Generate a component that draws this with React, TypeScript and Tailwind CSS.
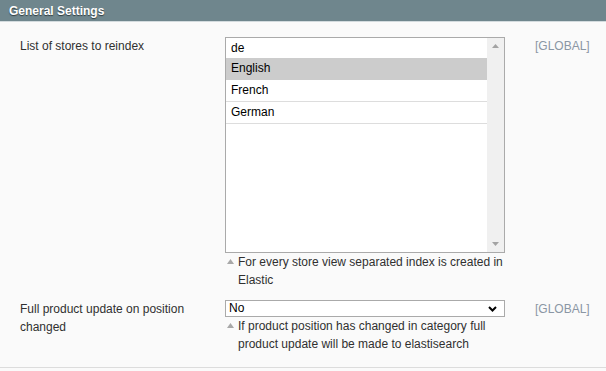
import React from "react"

const Hint = ({ children }: { children: React.ReactNode }) => (
  <div className="flex leading-[18px] text-[#303030]">
    <span className="w-[13px] shrink-0 flex items-start pt-[6px] pl-[2px]">
      <svg width="7" height="5" viewBox="0 0 7 5">
        <path d="M0 5 L3.5 0 L7 5 Z" fill="#a8a8a8" />
      </svg>
    </span>
    <span>{children}</span>
  </div>
)

const Scope = () => <div className="ml-[30px] shrink-0 leading-[18px] text-[#8a96a4]">[GLOBAL]</div>

export default function App() {
  const options = ["English", "French", "German"]

  return (
    <div className="min-h-[371px] bg-[#fafafa] font-['Liberation_Sans',Arial,sans-serif] text-[12px] text-[#303030]">
      <div className="h-[22px] bg-[#6f868d] border-b border-[#d3dbde] pl-[9px] flex items-center text-white font-bold text-[12px] [text-shadow:0_1px_1px_#2f3b3f]">
        General Settings
      </div>

      <div className="border-b border-[#dcdcdc] pl-5 pt-[15px] pb-[14px]">
        {/* row 1 */}
        <div className="flex">
          <div className="w-[205px] shrink-0 pr-[15px] leading-[18px]">List of stores to reindex</div>
          <div className="w-[280px] shrink-0">
            <div className="h-[216px] border border-[#aaaaaa] bg-white flex">
              <div className="flex-1 flex flex-col text-black">
                <div className="h-[20px] leading-[20px] pl-[5px]">de</div>
                {options.map((o, i) => (
                  <div
                    key={o}
                    className={
                      i === 0
                        ? "h-[22px] leading-[21px] pl-[5px] bg-[#cccccc] border-b border-[#cccccc]"
                        : "h-[22px] leading-[21px] pl-[5px] border-b border-[#dddddd]"
                    }
                  >
                    {o}
                  </div>
                ))}
              </div>
              <div className="w-[17px] bg-[#f0f0f0] flex flex-col justify-between items-center py-[6px]">
                <svg width="7" height="4" viewBox="0 0 7 4">
                  <path d="M0 4 L3.5 0 L7 4 Z" fill="#a3a3a3" />
                </svg>
                <svg width="7" height="4" viewBox="0 0 7 4">
                  <path d="M0 0 L3.5 4 L7 0 Z" fill="#a3a3a3" />
                </svg>
              </div>
            </div>
            <Hint>For every store view separated index is created in Elastic</Hint>
          </div>
          <Scope />
        </div>

        {/* row 2 */}
        <div className="flex mt-[11px]">
          <div className="w-[205px] shrink-0 pr-[15px] leading-[18px]">Full product update on position changed</div>
          <div className="w-[280px] shrink-0">
            <div className="h-[17px] border border-[#aaaaaa] bg-white flex items-center justify-between pl-[3px] pr-[7px] text-black">
              <span className="leading-[15px]">No</span>
              <svg width="9" height="6" viewBox="0 0 9 6">
                <path d="M1 1 L4.5 4.5 L8 1" fill="none" stroke="#000" strokeWidth="2" />
              </svg>
            </div>
            <Hint>If product position has changed in category full product update will be made to elastisearch</Hint>
          </div>
          <Scope />
        </div>
      </div>
    </div>
  )
}
